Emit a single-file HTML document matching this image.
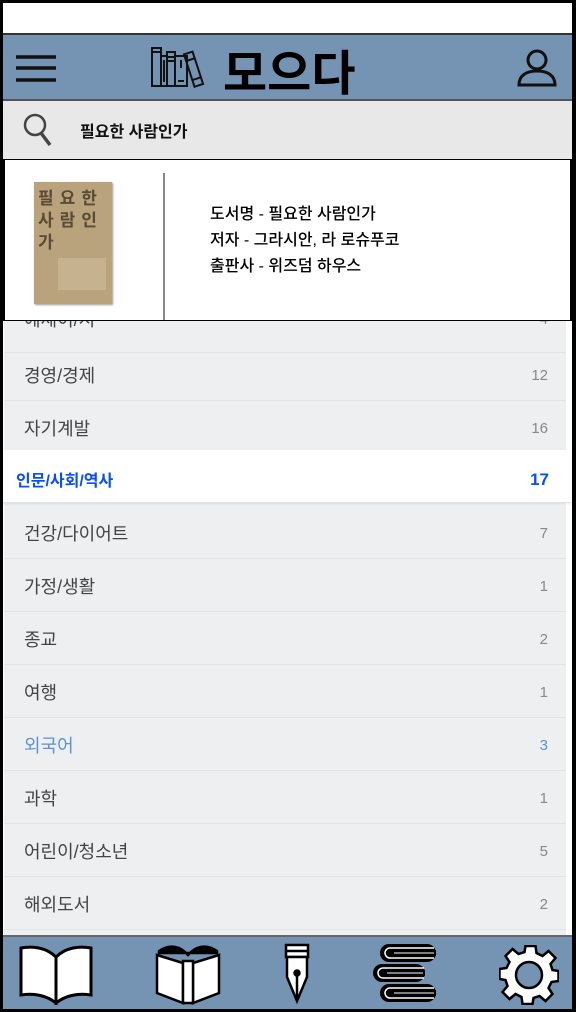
<!DOCTYPE html>
<html><head><meta charset="utf-8">
<style>
*{margin:0;padding:0;box-sizing:border-box}
body{width:576px;height:1012px;background:#fff;font-family:"Liberation Sans","Noto Sans CJK KR",sans-serif;position:relative;overflow:hidden}
.frame{position:absolute;left:0;top:0;width:576px;height:1012px;border:3px solid #000;border-right-width:4px}
.hdr{position:absolute;left:3px;top:33px;width:569px;height:68px;background:#7593b3;border-top:2px solid #333;border-bottom:2px solid #555}
.search{position:absolute;left:3px;top:101px;width:569px;height:58px;background:#e8e8e8}
.search span{position:absolute;left:77px;top:17px;font-size:16px;font-weight:bold;color:#111}
.list{position:absolute;left:4px;top:300px;width:562px;height:635px;background:#eeeff1}
.row{position:absolute;left:0;width:562px;height:53px;border-bottom:1px solid #e2e3e6}
.row .t{position:absolute;left:20px;top:14px;font-size:18px;color:#444}
.row .n{position:absolute;right:18px;top:19px;font-size:15px;color:#888}
.sel{background:#fff;left:-1px;width:568px;box-shadow:0 1px 2px rgba(0,0,0,.08)}
.sel .t{color:#0a4ff0;font-weight:bold;font-size:16px;left:13px;top:17px}
.sel .n{color:#0a4ff0;font-weight:bold;font-size:17px;right:22px;top:20px}
.light .t,.light .n{color:#5b93d3}
.card{position:absolute;left:3px;top:159px;width:569px;height:162px;background:#fff;border:1px solid #000;border-left-width:2px;border-right-width:2px;overflow:hidden}
.card .div{position:absolute;left:158px;top:13px;width:2px;height:150px;background:#888}
.card .info{position:absolute;left:205px;top:42px;font-size:16px;line-height:26px;color:#000;font-weight:500}
.bar{position:absolute;left:3px;top:935px;width:569px;height:74px;background:#7593b3;border-top:2px solid #666}
</style></head><body>
<div class="hdr">
 <svg style="position:absolute;left:12px;top:18px" width="42" height="32"><g stroke="#111" stroke-width="3.5"><line x1="1" y1="4" x2="41" y2="4"/><line x1="1" y1="15" x2="41" y2="15"/><line x1="1" y1="27" x2="41" y2="27"/></g></svg>
 <svg style="position:absolute;left:147px;top:9px" width="58" height="44" fill="none" stroke="#111" stroke-width="2"><rect x="2" y="4" width="9" height="38"/><line x1="2" y1="8" x2="11" y2="8"/><rect x="11" y="12" width="6" height="30"/><line x1="14" y1="16" x2="14" y2="38"/><rect x="17" y="8" width="8" height="34"/><line x1="17" y1="13" x2="25" y2="13"/><line x1="17" y1="17" x2="25" y2="17"/><rect x="25" y="12" width="12" height="30"/><line x1="31" y1="16" x2="31" y2="24"/><line x1="28" y1="37" x2="34" y2="37"/><g transform="rotate(-18 44 25)"><rect x="39" y="8" width="9" height="34"/><line x1="39" y1="15" x2="48" y2="15"/><line x1="39" y1="35" x2="48" y2="35"/></g></svg>
 <div style="position:absolute;left:220px;top:-1px;font-size:48px;font-weight:bold;color:#000">모으다</div>
 <svg style="position:absolute;left:514px;top:14px" width="40" height="38" fill="none" stroke="#111" stroke-width="3"><circle cx="20" cy="11" r="9"/><path d="M2 36 C2 26 10 22 20 22 C30 22 38 26 38 36 Z"/></svg>
</div>
<div class="search">
 <svg style="position:absolute;left:20px;top:12px" width="30" height="36" fill="none" stroke="#444" stroke-width="2.5"><circle cx="12" cy="12" r="10"/><line x1="18" y1="20" x2="27" y2="32" stroke-width="3.5"/></svg>
 <span>필요한 사람인가</span>
</div>
<div class="list">
 <div class="row" style="top:0"><span class="t" style="top:6px">에세이/시</span><span class="n" style="top:11px">4</span></div>
 <div class="row" style="top:48px"><span class="t">경영/경제</span><span class="n">12</span></div>
 <div class="row" style="top:101px"><span class="t">자기계발</span><span class="n">16</span></div>
 <div class="row sel" style="top:150px"><span class="t">인문/사회/역사</span><span class="n">17</span></div>
 <div class="row" style="top:206px"><span class="t">건강/다이어트</span><span class="n">7</span></div>
 <div class="row" style="top:259px"><span class="t">가정/생활</span><span class="n">1</span></div>
 <div class="row" style="top:312px"><span class="t">종교</span><span class="n">2</span></div>
 <div class="row" style="top:365px"><span class="t">여행</span><span class="n">1</span></div>
 <div class="row light" style="top:418px"><span class="t">외국어</span><span class="n">3</span></div>
 <div class="row" style="top:471px"><span class="t">과학</span><span class="n">1</span></div>
 <div class="row" style="top:524px"><span class="t">어린이/청소년</span><span class="n">5</span></div>
 <div class="row" style="top:577px"><span class="t">해외도서</span><span class="n">2</span></div>
</div>
<div class="card">
 <div style="position:absolute;left:29px;top:22px;width:78px;height:122px;background:#b9a37c;box-shadow:1px 1px 2px #999">
  <div style="position:absolute;left:4px;top:6px;font-size:17px;line-height:22px;color:#5b4a35;font-weight:bold;letter-spacing:6px">필요한<br>사람인<br>가</div>
  <div style="position:absolute;left:24px;top:76px;width:48px;height:32px;background:#c6b28e"></div>
 </div>
 <div class="div"></div>
 <div class="info">도서명 - 필요한 사람인가<br>저자 - 그라시안, 라 로슈푸코<br>출판사 - 위즈덤 하우스</div>
</div>
<div class="bar">
 <svg style="position:absolute;left:15px;top:6px" width="76" height="62" fill="#fff" stroke="#000" stroke-width="3"><path d="M38 14 C28 4 14 3 3 5 L3 52 C15 50 28 52 38 60 Z"/><path d="M38 14 C48 4 62 3 73 5 L73 52 C61 50 48 52 38 60 Z"/></svg>
 <svg style="position:absolute;left:150px;top:4px" width="70" height="64" stroke="#000" stroke-width="2.5"><path d="M6 10 C18 2 28 6 35 14 C42 6 52 2 64 10 L64 12 L6 12Z" fill="#000"/><path d="M4 14 L30 22 L30 62 L4 52Z" fill="#fff"/><path d="M66 14 L40 22 L40 62 L66 52Z" fill="#fff"/><rect x="30" y="20" width="10" height="42" fill="#fff"/></svg>
 <svg style="position:absolute;left:280px;top:6px" width="28" height="62" stroke="#000" stroke-width="2.5" fill="#fff"><rect x="3" y="2" width="22" height="12"/><line x1="3" y1="8" x2="25" y2="8"/><path d="M4 14 L24 14 L24 34 L14 58 L4 34Z"/><line x1="14" y1="30" x2="14" y2="56"/><circle cx="14" cy="30" r="2.5" fill="#000"/></svg>
 <svg style="position:absolute;left:367px;top:5px" width="70" height="62">
  <g fill="#000"><rect x="10" y="2" width="56" height="18" rx="9"/><rect x="3" y="22" width="52" height="18" rx="9"/><rect x="10" y="42" width="56" height="18" rx="9"/></g>
  <g fill="none" stroke="#fff" stroke-width="1.5"><path d="M64 6 L20 6 A5 5 0 0 0 20 16 L64 16"/><path d="M54 26 L13 26 A5 5 0 0 0 13 36 L54 36"/><path d="M64 46 L20 46 A5 5 0 0 0 20 56 L64 56"/></g>
  <g fill="#000"><rect x="22" y="8" width="44" height="6"/><rect x="15" y="28" width="40" height="6"/><rect x="22" y="48" width="44" height="6"/></g>
  <g stroke="#fff" stroke-width="1"><line x1="24" y1="11" x2="64" y2="11"/><line x1="17" y1="31" x2="53" y2="31"/><line x1="24" y1="51" x2="64" y2="51"/></g>
 </svg>
 <svg style="position:absolute;left:496px;top:8px" width="60" height="60" viewBox="0 0 60 60"><g transform="translate(30 30)"><path fill="#fff" stroke="#000" stroke-width="2.5" d="M-5 -27 L5 -27 L6 -20 L12 -17 L18 -22 L25 -15 L20 -9 L22 -3 L28 -2 L28 8 L21 9 L18 15 L22 21 L15 28 L9 23 L3 25 L2 31 L-8 31 L-9 24 L-15 21 L-21 26 L-28 19 L-23 13 L-25 7 L-31 6 L-31 -4 L-24 -5 L-21 -11 L-25 -17 L-18 -24 L-12 -19 L-6 -21 Z" transform="translate(1.5 -2)"/><circle cx="0" cy="0" r="13" fill="#7593b3" stroke="#000" stroke-width="2.5"/></g></svg>
</div>
<div class="frame"></div>
</body></html>
